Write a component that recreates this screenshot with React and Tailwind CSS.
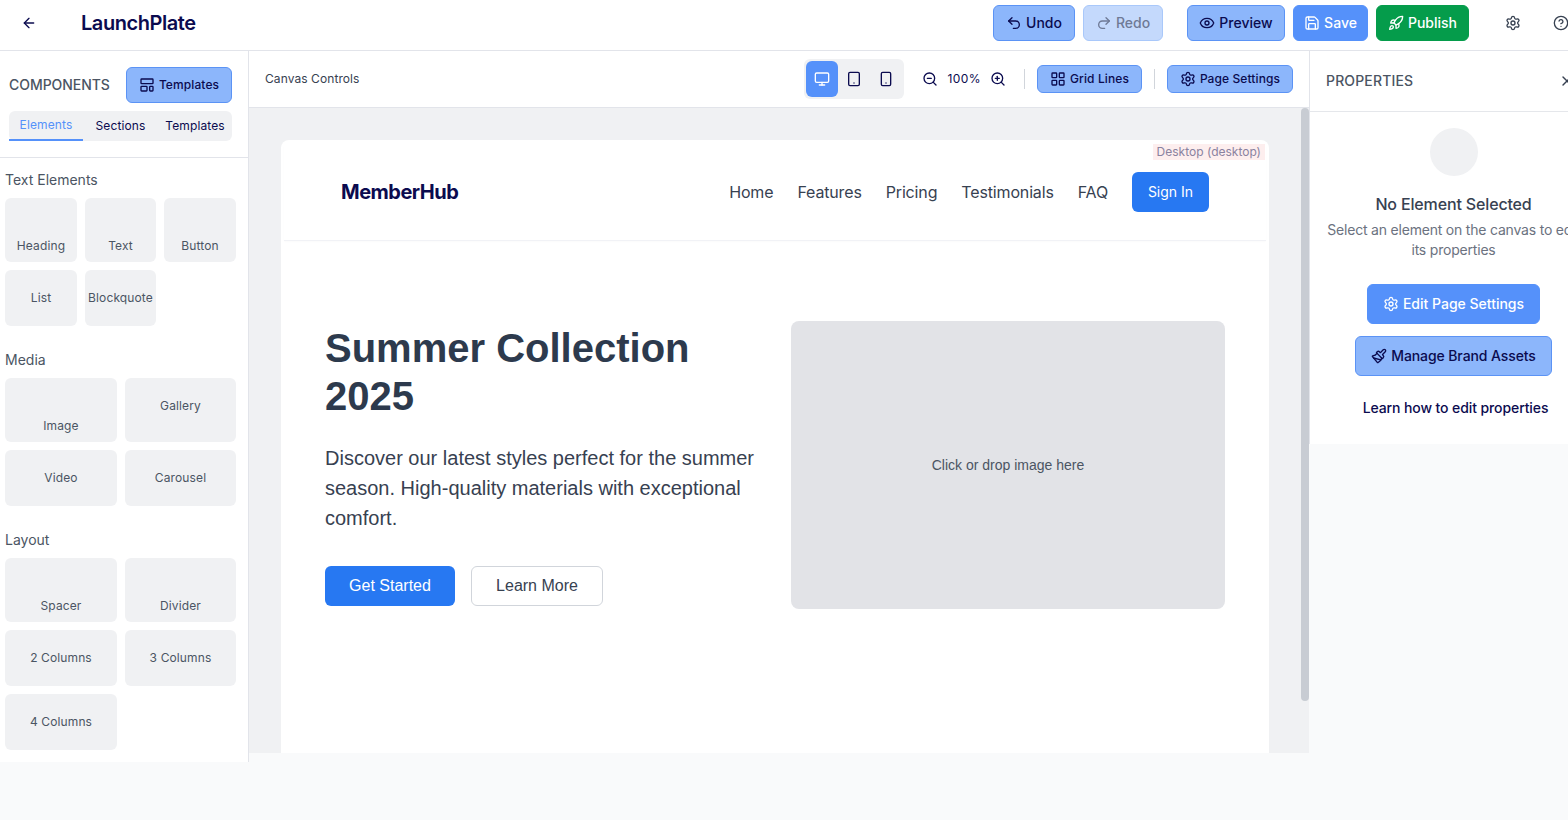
import React from "react";
import { ArrowLeft, Undo2, Redo2, Eye, Save, Rocket, Settings, CircleHelp, LayoutTemplate, Monitor, Tablet, Smartphone, ZoomOut, ZoomIn, LayoutGrid, X, Paintbrush } from "lucide-react";

const navy = "text-[#0b0b4f]";

function Btn({ icon: Icon, children, kind = "soft", className = "" }) {
  const kinds = {
    soft: "bg-[#8cb6fb] border border-[#5b93f5] text-[#0b0b4f]",
    faded: "bg-[#c4d9fc] border border-[#a9c8fa] text-[#6f7a96]",
    solid: "bg-[#5591fa] border border-[#5591fa] text-white",
    green: "bg-[#059c4b] border border-[#059c4b] text-white",
  };
  return (
    <button className={`flex items-center justify-center gap-1 rounded-md font-medium ${kinds[kind]} ${className}`}>
      <Icon size={16} strokeWidth={2} />
      <span>{children}</span>
    </button>
  );
}

function Tile({ label, className = "", pos = "center" }) {
  const p = { center: "items-center", low: "items-end pb-2", high: "items-start pt-[20px]" }[pos];
  return (
    <div className={`flex justify-center rounded-md bg-[#f0f1f3] text-xs leading-4 tracking-[0.12px] text-[#4b5563] ${p} ${className}`}>
      {label}
    </div>
  );
}

function Section({ title, children, cols, className = "" }) {
  return (
    <div className={className}>
      <h3 className="mb-2 text-sm leading-5 text-[#4b5563]">{title}</h3>
      <div className={cols}>{children}</div>
    </div>
  );
}

function Header() {
  return (
    <header className="flex h-[51px] shrink-0 items-center border-b border-[#e2e4ea] bg-white pb-[4px]">
      <ArrowLeft size={16} className={`ml-[21px] ${navy}`} />
      <span className={`ml-[44px] text-xl font-semibold tracking-[-0.45px] ${navy}`}>LaunchPlate</span>
      <div className="ml-auto flex h-9 items-center text-sm">
        <Btn icon={Undo2} className="h-9 w-[82px]">Undo</Btn>
        <Btn icon={Redo2} kind="faded" className="ml-2 h-9 w-[80px]">Redo</Btn>
        <Btn icon={Eye} className="ml-6 h-9 w-[98px]">Preview</Btn>
        <Btn icon={Save} kind="solid" className="ml-2 h-9 w-[75px]">Save</Btn>
        <Btn icon={Rocket} kind="green" className="ml-2 h-9 w-[93px]">Publish</Btn>
        <Settings size={16} className="ml-[36px] text-[#374151]" />
        <CircleHelp size={16} className="ml-[32px] mr-[-1px] shrink-0 text-[#374151]" />
      </div>
    </header>
  );
}

function Sidebar() {
  return (
    <aside className="flex h-[711px] w-[249px] shrink-0 flex-col border-r border-[#e2e4ea] bg-white">
      <div className="h-[107px] shrink-0 border-b border-[#e2e4ea] pl-[9px] pr-4 pt-4">
        <div className="flex items-center justify-between">
          <span className="text-sm font-medium tracking-[-0.05px] text-[#4b5563]">COMPONENTS</span>
          <Btn icon={LayoutTemplate} className="h-9 w-[106px] text-xs tracking-[0.1px]">Templates</Btn>
        </div>
        <div className={`mt-2 flex h-[30px] rounded-md bg-[#f0f1f3] text-xs tracking-[0.12px] ${navy}`}>
          <div className="flex w-[74px] items-center justify-center border-b-2 border-[#5591fa] pb-[1px] text-[#5591fa]">Elements</div>
          <div className="flex w-[75px] items-center justify-center">Sections</div>
          <div className="flex w-[74px] items-center justify-center">Templates</div>
        </div>
      </div>
      <div className="pl-[5px] pr-3 pt-3">
        <Section title="Text Elements" cols="grid grid-cols-[72px_71px_72px] gap-2">
          <Tile label="Heading" pos="low" className="h-16" />
          <Tile label="Text" pos="low" className="h-16" />
          <Tile label="Button" pos="low" className="h-16" />
          <Tile label="List" className="h-14" />
          <Tile label="Blockquote" className="h-14" />
        </Section>
        <Section title="Media" className="mt-6" cols="grid grid-cols-[112px_111px] gap-2">
          <Tile label="Image" pos="low" className="h-16" />
          <Tile label="Gallery" pos="high" className="h-16" />
          <Tile label="Video" className="h-14" />
          <Tile label="Carousel" className="h-14" />
        </Section>
        <Section title="Layout" className="mt-6" cols="grid grid-cols-[112px_111px] gap-2">
          <Tile label="Spacer" pos="low" className="h-16" />
          <Tile label="Divider" pos="low" className="h-16" />
          <Tile label="2 Columns" className="h-14" />
          <Tile label="3 Columns" className="h-14" />
          <Tile label="4 Columns" className="h-14" />
        </Section>
      </div>
    </aside>
  );
}

function CanvasControls() {
  return (
    <div className="flex h-[57px] shrink-0 items-center border-b border-[#e2e4ea] bg-white pl-4 pr-4">
      <span className="text-xs tracking-[0.08px] text-[#374151]">Canvas Controls</span>
      <div className="ml-auto flex items-center">
        <div className={`flex h-10 w-[100px] items-center rounded-md bg-[#f0f1f3] p-[2px] ${navy}`}>
          <div className="flex h-9 w-8 items-center justify-center rounded-md bg-[#5591fa] text-white"><Monitor size={16} /></div>
          <div className="flex h-9 w-8 items-center justify-center"><Tablet size={16} /></div>
          <div className="flex h-9 w-8 items-center justify-center"><Smartphone size={16} /></div>
        </div>
        <ZoomOut size={16} className={`ml-[18px] ${navy}`} />
        <span className={`ml-[10px] text-xs tracking-[0.4px] ${navy}`}>100%</span>
        <ZoomIn size={16} className={`ml-[9px] ${navy}`} />
        <div className="ml-[18px] h-5 w-px bg-[#d1d5db]" />
        <Btn icon={LayoutGrid} className="ml-3 h-7 w-[105px] text-xs tracking-[0.1px]">Grid Lines</Btn>
        <div className="ml-3 h-5 w-px bg-[#d1d5db]" />
        <Btn icon={Settings} className="ml-3 h-7 w-[126px] text-xs tracking-[0.1px]">Page Settings</Btn>
      </div>
    </div>
  );
}

function PageCard() {
  return (
    <div className="relative ml-[32px] mr-[40px] mt-8 flex-1 overflow-hidden rounded-t-lg bg-white">
      <div className="absolute right-[4px] top-[4px] bg-[#fdeeee] px-1 text-xs leading-4 text-[#8a829f]">Desktop (desktop)</div>
      <nav className="mx-[3px] flex h-[101px] items-center rounded-t-lg border-b border-[#f1f2f6] pl-[57px] pr-[57px] pt-[4px] shadow-[0_1px_2px_rgba(0,0,0,0.02)]">
        <span className={`text-xl font-bold tracking-[-0.5px] ${navy}`}>MemberHub</span>
        <div className="ml-auto flex items-center gap-6 text-base tracking-[-0.15px] text-[#374151]">
          <span>Home</span>
          <span>Features</span>
          <span>Pricing</span>
          <span>Testimonials</span>
          <span>FAQ</span>
          <span className="flex h-10 w-[77px] items-center justify-center rounded-md bg-[#2778f2] text-sm tracking-normal text-white">Sign In</span>
        </div>
      </nav>
      <div className="flex pl-11 pr-11 pt-20 font-['Liberation_Sans',Arial,sans-serif]">
        <div className="w-[450px]">
          <h1 className="pt-[3px] text-[40px] font-bold leading-[48px] text-[#2d3a4d]">Summer Collection<br />2025</h1>
          <p className="mt-[23px] text-xl leading-[30px] text-[#374151]">Discover our latest styles perfect for the summer season. High-quality materials with exceptional comfort.</p>
          <div className="mt-[33px] flex gap-4">
            <span className="flex h-10 w-[130px] items-center justify-center rounded-md bg-[#2778f2] text-base text-white">Get Started</span>
            <span className="flex h-10 w-[132px] items-center justify-center rounded-md border border-[#d1d5db] bg-white text-base text-[#374151]">Learn More</span>
          </div>
        </div>
        <div className="ml-[16px] flex h-[288px] w-[434px] shrink-0 items-center justify-center rounded-lg bg-[#e2e3e7] text-sm text-[#4b5563]">Click or drop image here</div>
      </div>
    </div>
  );
}

function Canvas() {
  return (
    <main className="flex h-[702px] w-[1060px] shrink-0 flex-col bg-[#f0f1f3]">
      <CanvasControls />
      <div className="relative flex min-h-0 flex-1 flex-col overflow-hidden">
        <PageCard />
        <div className="absolute right-0 top-0 h-[593px] w-2 rounded-full bg-[#c8ccd3]" />
      </div>
    </main>
  );
}

function Properties() {
  return (
    <aside className="h-[393px] w-[288px] shrink-0 border-l border-[#e2e4ea] bg-white">
      <div className="flex h-[61px] items-center justify-between border-b border-[#e5e7eb] pl-4 pr-4">
        <span className="text-sm font-medium tracking-[0.15px] text-[#4b5563]">PROPERTIES</span>
        <X size={16} className="mr-[6px] text-[#374151]" />
      </div>
      <div className="flex flex-col items-center px-4 pt-4">
        <div className="h-12 w-12 rounded-full bg-[#f0f1f3]" />
        <h3 className="mt-4 text-base font-medium leading-6 tracking-[-0.15px] text-[#374151]">No Element Selected</h3>
        <p className="mt-1 text-center text-sm leading-5 tracking-[-0.2px] text-[#6b7280]">Select an element on the canvas to edit its properties</p>
        <Btn icon={Settings} kind="solid" className="mt-6 h-10 w-[173px] text-sm">Edit Page Settings</Btn>
        <Btn icon={Paintbrush} className="mt-3 h-10 w-[197px] text-sm tracking-[-0.1px]">Manage Brand Assets</Btn>
        <span className={`ml-[4px] mt-[22px] text-sm font-medium leading-5 tracking-[-0.1px] ${navy}`}>Learn how to edit properties</span>
      </div>
    </aside>
  );
}

export default function App() {
  return (
    <div className="flex h-[820px] w-[1568px] flex-col overflow-hidden bg-[#f9fafb] font-['Inter',sans-serif]">
      <Header />
      <div className="flex min-h-0 flex-1 items-start">
        <Sidebar />
        <Canvas />
        <Properties />
      </div>
    </div>
  );
}
